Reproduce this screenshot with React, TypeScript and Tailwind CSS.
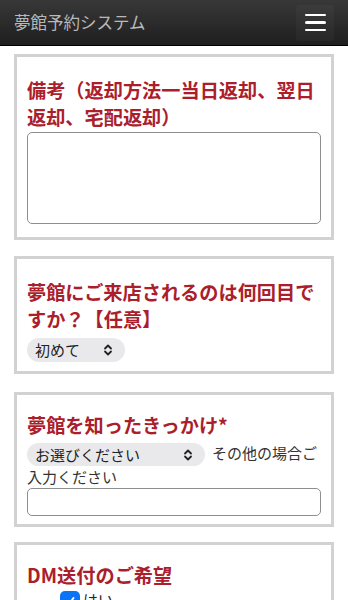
import React from "react";

const Chevron = () => (
  <svg width="10" height="12" viewBox="0 0 10 12" fill="none" stroke="#222" strokeWidth="1.8" strokeLinecap="round" strokeLinejoin="round">
    <path d="M2 4.5 L5 1.5 L8 4.5" />
    <path d="M2 7.5 L5 10.5 L8 7.5" />
  </svg>
);

const Card = ({ children, className = "" }: { children: React.ReactNode; className?: string }) => (
  <div className={"mx-[14px] border-[3px] border-[#d2d2d2] bg-white px-[10px] " + className}>{children}</div>
);

const Title = ({ children }: { children: React.ReactNode }) => (
  <h2 className="text-[19.2px] font-bold leading-[27px] text-[#ab1e2c]">{children}</h2>
);

export default function App() {
  return (
    <div className="min-h-screen bg-white" style={{ fontFamily: '"Noto Sans CJK JP", "Noto Sans", sans-serif' }}>
      <header className="flex h-[46px] items-center justify-between border-b border-black bg-gradient-to-b from-[#383838] to-[#1f1f1f] pl-[14px] pr-[14px]">
        <div className="text-[16.5px] text-[#b9b9b9]">夢館予約システム</div>
        <button className="flex h-[36px] w-[38px] flex-col items-center justify-center gap-[5px] rounded-[3px] bg-white/[0.03]">
          <span className="block h-[2.5px] w-[21px] rounded-sm bg-white" />
          <span className="block h-[2.5px] w-[21px] rounded-sm bg-white" />
          <span className="block h-[2.5px] w-[21px] rounded-sm bg-white" />
        </button>
      </header>

      <div className="flex flex-col pt-[8px]">
        <Card className="pt-[20px] pb-[13px]">
          <Title>備考（返却方法一当日返却、翌日返却、宅配返却）</Title>
          <textarea className="mt-[1px] block h-[92px] w-full resize-none rounded-[5px] border border-[#8e8e8e] bg-white" />
        </Card>

        <Card className="mt-[16px] pt-[20px] pb-[9px]">
          <Title>夢館にご来店されるのは何回目ですか？【任意】</Title>
          <div className="mt-[5px] flex h-[24px] w-[98px] items-center justify-between rounded-full bg-[#e9e9ec] pl-[8px] pr-[12px] text-[15px] text-[#222]">
            <span>初めて</span>
            <Chevron />
          </div>
        </Card>

        <Card className="mt-[18px] pt-[17px] pb-[8px]">
          <Title>夢館を知ったきっかけ*</Title>
          <div className="mt-[3px] text-[15px] leading-[22px] text-[#333]">
            <span className="mr-[7px] inline-flex h-[23px] w-[178px] items-center justify-between rounded-full bg-[#e9e9ec] pl-[8px] pr-[12px] align-middle text-[#222]">
              <span>お選びください</span>
              <Chevron />
            </span>
            <span>その他の場合ご入力ください</span>
          </div>
          <input className="mt-0 block h-[28px] w-full rounded-[5px] border border-[#8e8e8e] bg-white" />
        </Card>

        <Card className="mt-[15px] pt-[17px] pb-[20px]">
          <Title>DM送付のご希望</Title>
          <label className="flex items-center pl-[33px] text-[15px] text-[#222]">
            <span className="flex h-[20px] w-[20px] items-center justify-center rounded-[5px] bg-[#0b74f5]">
              <svg width="12" height="12" viewBox="0 0 12 12" fill="none" stroke="white" strokeWidth="2" strokeLinecap="round" strokeLinejoin="round">
                <path d="M2.5 6.5 L5 9 L9.5 3" />
              </svg>
            </span>
            <span className="ml-[3px]">はい</span>
          </label>
        </Card>
      </div>
    </div>
  );
}
